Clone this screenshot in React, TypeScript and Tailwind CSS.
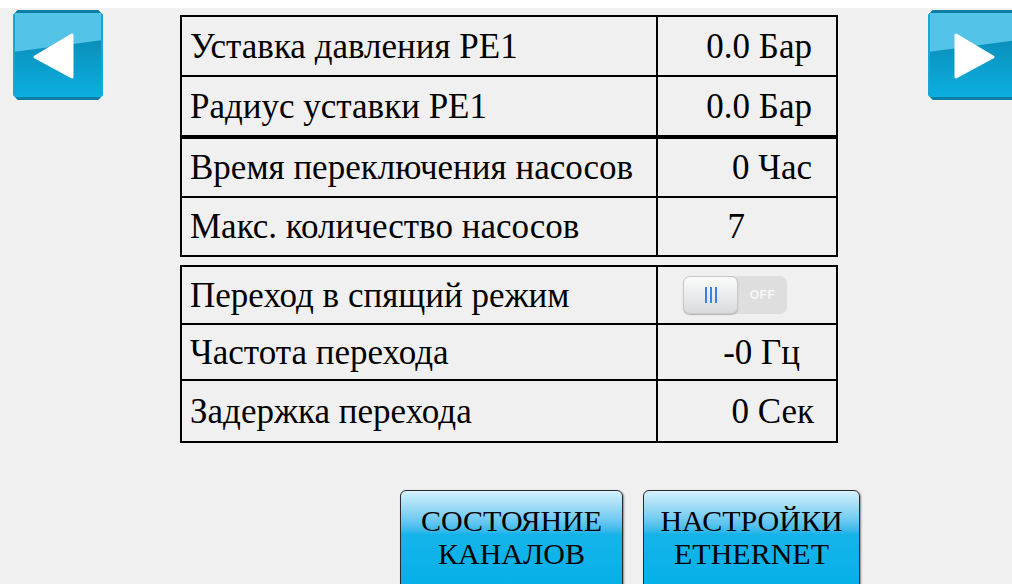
import React from "react";

// Panel typeface: Times-metric serif used by the HMI screen.
const serifFace = { fontFamily: "'Liberation Serif', 'Times New Roman', serif" };
const sansFace = { fontFamily: "'Liberation Sans', Arial, sans-serif" };

function ArrowButton({ dir }: { dir: "left" | "right" }) {
  const tri =
    dir === "left" ? "22,47 59,25 59,67" : "65,47 28,25 28,67";
  return (
    <svg width="90" height="90" viewBox="0 0 90 90" className="block shrink-0">
      <defs>
        <linearGradient id={`low-${dir}`} x1="0" y1="0" x2="0" y2="1">
          <stop offset="0" stopColor="#0a7fa6" />
          <stop offset="1" stopColor="#0bb0e2" />
        </linearGradient>
        <clipPath id={`clip-${dir}`}>
          <polygon points="5,0 85,0 90,5 90,85 85,90 5,90 0,85 0,5" />
        </clipPath>
      </defs>
      <g clipPath={`url(#clip-${dir})`}>
        <rect x="0" y="0" width="90" height="90" fill={`url(#low-${dir})`} />
        <polygon points="0,0 90,0 90,30 0,42" fill="#53c3e7" />
        <rect x="0" y="0" width="90" height="3" fill="#0d7ea3" />
        <rect x="0" y="87" width="90" height="3" fill="#0d7ea3" />
        <rect x="0" y="0" width="2" height="90" fill="#1aa6d4" />
        <rect x="88" y="0" width="2" height="90" fill="#1aa6d4" />
      </g>
      <polygon
        points={tri}
        fill="#ffffff"
        stroke="#ffffff"
        strokeWidth="3"
        strokeLinejoin="round"
      />
    </svg>
  );
}

function Toggle() {
  return (
    <div className="flex h-[38px] w-[104px] items-center rounded-[7px] bg-[#dedede]">
      <div className="flex h-[38px] w-[55px] items-center justify-center gap-[3px] rounded-[7px] border border-[#c8c8c8] bg-gradient-to-b from-[#fbfbfb] to-[#d9dcdf] shadow-[0_1px_1px_rgba(0,0,0,0.25)]">
        <span className="h-[16px] w-[2px] bg-[#3d7bf0]" />
        <span className="h-[16px] w-[2px] bg-[#3d7bf0]" />
        <span className="h-[16px] w-[2px] bg-[#3d7bf0]" />
      </div>
      <div className="flex-1 text-center text-[12px] font-bold tracking-[0.5px] text-[#f7f7f7]">
        <span style={sansFace}>OFF</span>
      </div>
    </div>
  );
}

type Row = { label: string; value: React.ReactNode; h: string; pr: string };

function Table({ rows, className }: { rows: Row[]; className?: string }) {
  return (
    <div className={`border-2 border-black ${className ?? ""}`}>
      {rows.map((r, i) => (
        <div
          key={r.label}
          className={`flex ${r.h} ${i > 0 ? "border-t-2 border-black" : ""}`}
        >
          <div className="flex w-[476px] items-center border-r-2 border-black pl-[8px] text-[35px] leading-none text-black">
            <span style={serifFace}>{r.label}</span>
          </div>
          <div
            className={`flex flex-1 items-center justify-end ${r.pr} text-[35px] leading-none text-black`}
          >
            {typeof r.value === "string" ? (
              <span style={serifFace}>{r.value}</span>
            ) : (
              r.value
            )}
          </div>
        </div>
      ))}
    </div>
  );
}

function BigButton({ lines, w }: { lines: string[]; w: string }) {
  return (
    <div
      className={`flex h-[110px] ${w} shrink-0 flex-col items-center rounded-[6px] border border-[#2b2b2b] bg-gradient-to-b from-[#d4f2fc] via-[#14b4ea] via-40% to-[#00b0e8] pt-[13px] text-[30px] leading-[33px] text-black shadow-[1px_1px_2px_rgba(0,0,0,0.45)]`}
    >
      {lines.map((l) => (
        <span key={l} style={serifFace}>
          {l}
        </span>
      ))}
    </div>
  );
}

export default function App() {
  return (
    <div className="h-[584px] w-[1012px] overflow-hidden bg-[#f0f0f0]">
      <div className="h-[8px] bg-white" />
      <div className="flex items-start">
        <div className="ml-[13px] mt-[2px] shrink-0">
          <ArrowButton dir="left" />
        </div>
        <div className="ml-[77px] mt-[7px] w-[658px] shrink-0">
          <Table
            rows={[
              { label: "Уставка давления PE1", value: "0.0 Бар", h: "h-[58px]", pr: "pr-[24px]" },
              { label: "Радиус уставки PE1", value: "0.0 Бар", h: "h-[60px]", pr: "pr-[24px]" },
            ]}
          />
          <Table
            rows={[
              { label: "Время переключения насосов", value: "0 Час", h: "h-[57px]", pr: "pr-[24px]" },
              { label: "Макс. количество насосов", value: "7", h: "h-[59px]", pr: "pr-[91px]" },
            ]}
          />
          <Table
            className="mt-[8px]"
            rows={[
              {
                label: "Переход в спящий режим",
                value: (
                  <div className="w-full pl-[25px]">
                    <Toggle />
                  </div>
                ),
                h: "h-[56px]",
                pr: "pr-0",
              },
              { label: "Частота перехода", value: "-0 Гц", h: "h-[56px]", pr: "pr-[36px]" },
              { label: "Задержка перехода", value: "0 Сек", h: "h-[62px]", pr: "pr-[22px]" },
            ]}
          />
          <div className="ml-[220px] mt-[47px] flex gap-[20px]">
            <BigButton lines={["СОСТОЯНИЕ", "КАНАЛОВ"]} w="w-[223px]" />
            <BigButton lines={["НАСТРОЙКИ", "ETHERNET"]} w="w-[217px]" />
          </div>
        </div>
        <div className="ml-[90px] mt-[2px] shrink-0">
          <ArrowButton dir="right" />
        </div>
      </div>
    </div>
  );
}
